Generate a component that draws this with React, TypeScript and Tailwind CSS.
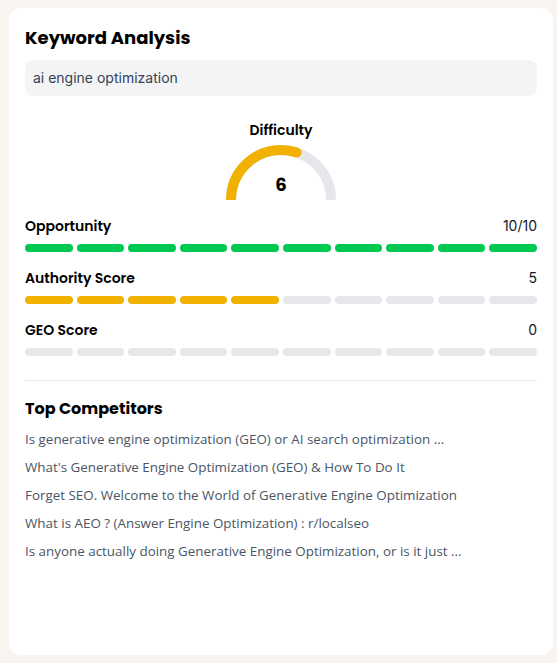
const heading = { fontFamily: "Poppins, Inter, 'Noto Sans', sans-serif" }

const competitors = [
    "Is generative engine optimization (GEO) or AI search optimization ...",
    "What's Generative Engine Optimization (GEO) & How To Do It",
    "Forget SEO. Welcome to the World of Generative Engine Optimization",
    "What is AEO ? (Answer Engine Optimization) : r/localseo",
    "Is anyone actually doing Generative Engine Optimization, or is it just ...",
]

const metrics = [
    { label: "Opportunity", value: "10/10", filled: 10, color: "bg-green-500" },
    { label: "Authority Score", value: "5", filled: 5, color: "bg-yellow-500" },
    { label: "GEO Score", value: "0", filled: 0, color: "bg-yellow-500" },
]

function Gauge({ value }: Readonly<{ value: number }>) {
    const r = 50
    const length = Math.PI * r
    return (
        <div className="relative h-[56px] w-[110px]">
            <svg width="110" height="56" viewBox="0 0 110 56" className="block">
                <path d="M 5 56 A 50 50 0 0 1 105 56" fill="none" stroke="#e5e7eb" strokeWidth="10" />
                <path
                    d="M 5 56 A 50 50 0 0 1 105 56"
                    fill="none"
                    stroke="#f0b100"
                    strokeWidth="10"
                    strokeLinecap="round"
                    strokeDasharray={ `${ (length * value) / 10 } ${ length }` }
                />
                <rect x="0" y="56" width="110" height="10" fill="white" />
            </svg>
            <span
                style={ heading }
                className="absolute inset-x-0 bottom-[3px] text-center text-lg leading-6 font-bold text-black">
                { value }
            </span>
        </div>
    )
}

function Bars({ filled, color }: Readonly<{ filled: number, color: string }>) {
    return (
        <div className="mt-2 flex gap-1">
            { Array.from({ length: 10 }).map((_, i) => (
                <div key={ i } className={ `h-2 flex-1 rounded-full ${ i < filled ? color : "bg-gray-200" }` } />
            )) }
        </div>
    )
}

export default function App() {
    return (
        <div className="min-h-[663px] bg-[#f8f4f0] pt-2 pb-2 pl-[9px]">
            <div className="flex h-[647px] w-[544px] flex-col rounded-xl bg-white p-4">
                <h1 style={ heading } className="text-lg leading-7 font-bold text-black">
                    Keyword Analysis
                </h1>
                <div className="mt-2 flex h-9 items-center rounded-lg bg-gray-100 px-2 font-['Inter',sans-serif] text-sm text-gray-700">
                    ai engine optimization
                </div>

                <div className="mt-6 flex flex-col items-center">
                    <div style={ heading } className="text-sm leading-5 font-semibold text-black">Difficulty</div>
                    <div className="mt-[4px]">
                        <Gauge value={ 6 } />
                    </div>
                </div>

                <div className="mt-4 flex flex-col gap-4">
                    { metrics.map(metric => (
                        <div key={ metric.label }>
                            <div className="flex items-center justify-between text-sm leading-5">
                                <span style={ heading } className="font-semibold text-black">{ metric.label }</span>
                                <span className="font-['Inter',sans-serif] text-gray-900">{ metric.value }</span>
                            </div>
                            <Bars filled={ metric.filled } color={ metric.color } />
                        </div>
                    )) }
                </div>

                <div className="mt-6 border-t border-gray-200" />

                <h2 style={ heading } className="mt-4 text-base leading-6 font-bold text-black">
                    Top Competitors
                </h2>
                <ul className="mt-2 flex flex-col gap-2 font-['Open_Sans',sans-serif] text-[13.4px] leading-5 text-gray-600">
                    { competitors.map(title => (
                        <li key={ title }>{ title }</li>
                    )) }
                </ul>
            </div>
        </div>
    )
}
